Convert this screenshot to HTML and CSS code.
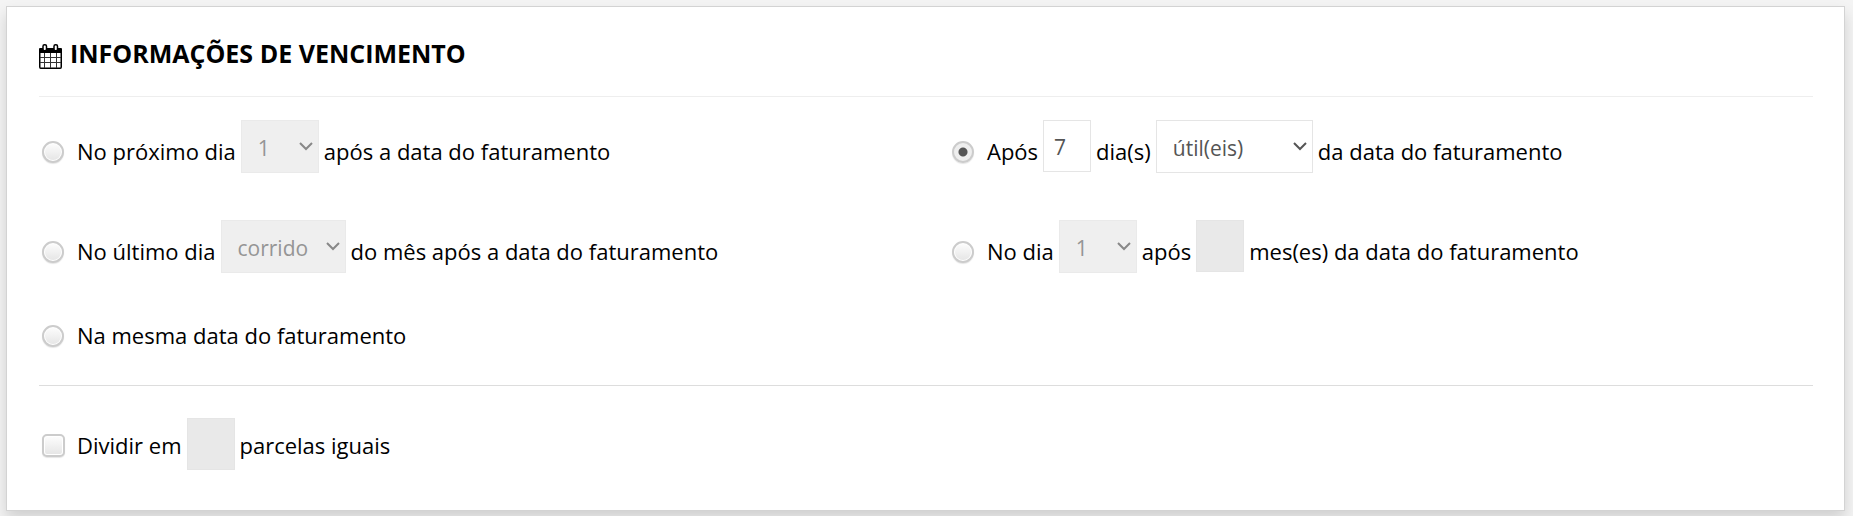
FILE: index.html
```html
<!DOCTYPE html>
<html lang="pt-BR">
<head>
  <meta charset="UTF-8">
  <title>Informações de vencimento</title>
  <link rel="stylesheet" href="styles.css">
</head>
<body>

  <form class="panel">
    <h2 class="panel-title">
      <svg class="icon-calendar" viewBox="0 0 24 25" aria-hidden="true">
        <path d="M1 4h21q1 0 1 1v4H0V5q0-1 1-1z"/>
        <path fill="none" stroke="#000" stroke-width="1.500" d="M.75 8v15q0 1.250 1 1.250h19.500q1 0 1-1.250V8"/>
        <path fill="none" stroke="#333" d="M5.500 9v15M11.500 9v15M17.500 9v15M1 13.500h21M1 18.500h21"/>
        <rect x="4" y=".75" width="3.500" height="6" rx="1.500" fill="#fff" stroke="#000" stroke-width="1.500"/>
        <rect x="15" y=".75" width="3.500" height="6" rx="1.500" fill="#fff" stroke="#000" stroke-width="1.500"/>
      </svg>
      INFORMAÇÕES DE VENCIMENTO
    </h2>

    <div class="options">
      <div class="option">
        <input type="radio" name="vencimento" id="proximo-dia">
        <label for="proximo-dia">No próximo dia</label>
        <select class="select-day" aria-label="Dia" disabled><option>1</option></select>
        <span class="text">após a data do faturamento</span>
      </div>

      <div class="option">
        <input type="radio" name="vencimento" id="apos-dias" checked>
        <label for="apos-dias">Após</label>
        <input type="text" class="number" aria-label="Quantidade de dias" value="7">
        <span class="text">dia(s)</span>
        <select class="select-type" aria-label="Tipo de dia">
          <option>útil(eis)</option>
          <option>corrido(s)</option>
        </select>
        <span class="text">da data do faturamento</span>
      </div>

      <div class="option">
        <input type="radio" name="vencimento" id="ultimo-dia">
        <label for="ultimo-dia">No último dia</label>
        <select class="select-last" aria-label="Tipo do último dia" disabled><option>corrido</option></select>
        <span class="text">do mês após a data do faturamento</span>
      </div>

      <div class="option">
        <input type="radio" name="vencimento" id="no-dia">
        <label for="no-dia">No dia</label>
        <select class="select-day" aria-label="Dia do mês" disabled><option>1</option></select>
        <span class="text">após</span>
        <input type="text" class="number" aria-label="Quantidade de meses" disabled>
        <span class="text">mes(es) da data do faturamento</span>
      </div>

      <div class="option option-simple">
        <input type="radio" name="vencimento" id="mesma-data">
        <label for="mesma-data">Na mesma data do faturamento</label>
      </div>
    </div>

    <div class="installments">
      <div class="option">
        <input type="checkbox" id="dividir">
        <label for="dividir">Dividir em</label>
        <input type="text" class="number" aria-label="Número de parcelas" disabled>
        <span class="text">parcelas iguais</span>
      </div>
    </div>
  </form>

</body>
</html>
```
FILE: styles.css
```css
* {
  box-sizing: border-box;
}

body {
  margin: 0;
  padding: 6px 8px 6px 6px;
  background: #f4f4f4;
  font-family: "Open Sans", sans-serif;
  font-size: 22px;
  line-height: 30px;
  color: #000;
}

.panel {
  padding: 32px 31px 39px 32px;
  background: #fff;
  border: 1px solid #d3d3d3;
  box-shadow: 0 8px 14px rgba(0, 0, 0, 0.15);
}

.panel-title {
  display: flex;
  align-items: flex-start;
  gap: 7px;
  margin: 0;
  padding-bottom: 27px;
  border-bottom: 1px solid #eee;
  font-size: 25px;
  line-height: 29px;
}

.icon-calendar {
  width: 24px;
  height: 25px;
  margin-top: 5px;
}

/* options */
.options {
  display: grid;
  grid-template-columns: 1fr 1fr;
  gap: 47px 46px;
  padding: 23px 0 35px;
}

.option {
  display: flex;
  align-items: center;
  gap: 5px;
  min-height: 53px;
  white-space: nowrap;
}

.option-simple {
  min-height: 30px;
}

.option label,
.text {
  padding-top: 8px;
}

.option-simple label,
.installments label,
.installments .text {
  padding-top: 0;
}

/* radio and checkbox */
input[type="radio"],
input[type="checkbox"] {
  appearance: none;
  flex: none;
  width: 22px;
  height: 22px;
  margin: 10px 8px 0 3px;
  border: 2px solid #ccc;
  border-radius: 50%;
  background: linear-gradient(#fcfcfc, #e6e6e6) content-box, #fff;
  padding: 1px;
  box-shadow: 0 1px 1px rgba(0, 0, 0, 0.1);
}

input[type="checkbox"] {
  width: 23px;
  height: 23px;
  margin-top: 2px;
  margin-right: 7px;
  border-radius: 5px;
}

.option-simple input[type="radio"] {
  margin-top: 2px;
}

input[type="radio"]:checked {
  background: radial-gradient(circle, #555 4px, #eee 5px);
}

/* fields */
select,
.number {
  appearance: none;
  height: 53px;
  margin: 0;
  border: 1px solid #e5e5e5;
  border-radius: 0;
  background-color: #fff;
  color: #555;
  font: 21px "Open Sans", sans-serif;
}

select {
  padding: 2px 30px 0 16px;
  background-image: url("data:image/svg+xml,%3Csvg xmlns='http://www.w3.org/2000/svg' width='14' height='9'%3E%3Cpath d='M1 1l6 6 6-6' fill='none' stroke='%23555' stroke-width='2'/%3E%3C/svg%3E");
  background-repeat: no-repeat;
  background-position: right 5px top 21px;
}

select:disabled {
  border-color: #eaeaea;
  background-color: #efefef;
  background-image: url("data:image/svg+xml,%3Csvg xmlns='http://www.w3.org/2000/svg' width='14' height='9'%3E%3Cpath d='M1 1l6 6 6-6' fill='none' stroke='%23888' stroke-width='2'/%3E%3C/svg%3E");
  color: #959595;
  opacity: 1;
}

.number {
  width: 48px;
  height: 52px;
  margin-bottom: 1px;
  padding: 2px 10px 0;
}

.number:disabled {
  background-color: #e9e9e9;
}

.select-day {
  width: 78px;
}

.select-last {
  width: 125px;
}

.select-type {
  width: 157px;
}

.installments {
  padding-top: 32px;
  border-top: 1px solid #ddd;
}
```
